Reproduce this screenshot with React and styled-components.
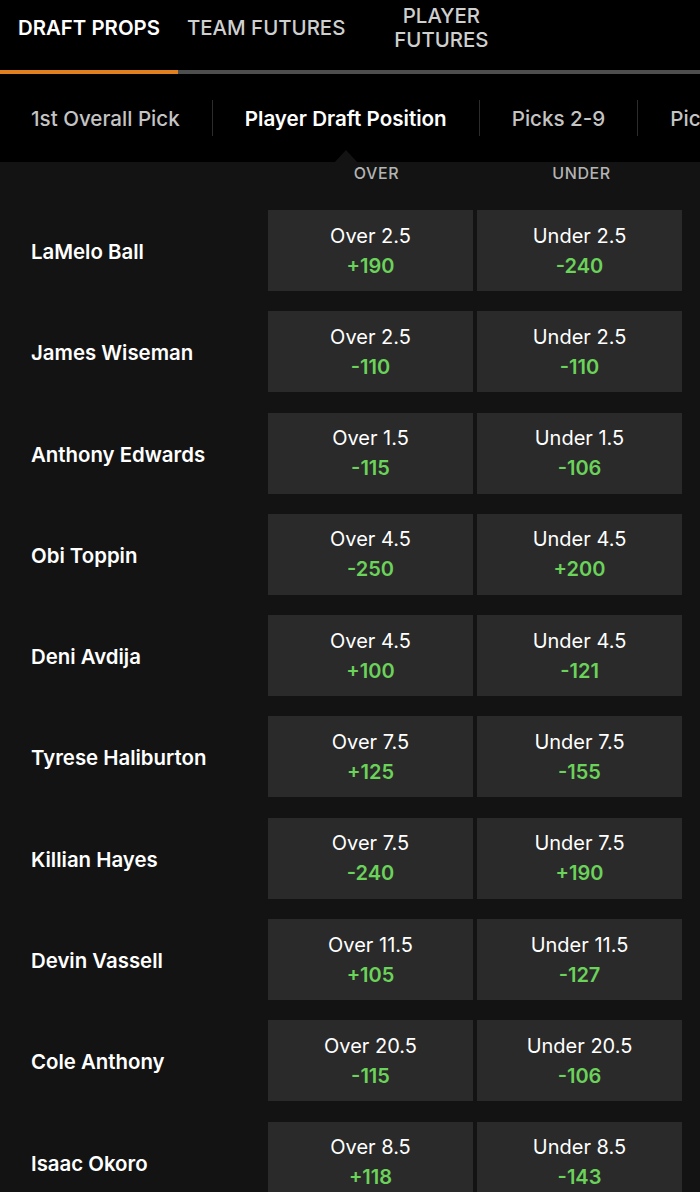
import React from 'react';
import styled, { createGlobalStyle } from 'styled-components';

const players = [
  { name: 'LaMelo Ball', line: '2.5', over: '+190', under: '-240' },
  { name: 'James Wiseman', line: '2.5', over: '-110', under: '-110' },
  { name: 'Anthony Edwards', line: '1.5', over: '-115', under: '-106' },
  { name: 'Obi Toppin', line: '4.5', over: '-250', under: '+200' },
  { name: 'Deni Avdija', line: '4.5', over: '+100', under: '-121' },
  { name: 'Tyrese Haliburton', line: '7.5', over: '+125', under: '-155' },
  { name: 'Killian Hayes', line: '7.5', over: '-240', under: '+190' },
  { name: 'Devin Vassell', line: '11.5', over: '+105', under: '-127' },
  { name: 'Cole Anthony', line: '20.5', over: '-115', under: '-106' },
  { name: 'Isaac Okoro', line: '8.5', over: '+118', under: '-143' },
];

const subTabs = ['1st Overall Pick', 'Player Draft Position', 'Picks 2-9', 'Picks 10-14'];

const App = () =>
  <Page>
    <GlobalStyle />
    <TopTabs>
      <TopTab active>DRAFT PROPS</TopTab>
      <TopTab>TEAM FUTURES</TopTab>
      <TopTab wrap>PLAYER<br />FUTURES</TopTab>
    </TopTabs>
    <Indicator>
      <IndicatorFill />
    </Indicator>
    <SubTabs>
      {subTabs.map((t, i) =>
        <SubTab key={t} active={i === 1} first={i === 0}>
          {t}
          {i === 1 && <Pointer />}
        </SubTab>
      )}
    </SubTabs>
    <Content>
      <HeaderRow>
        <span />
        <ColLabel shift={6}>OVER</ColLabel>
        <ColLabel shift={2}>UNDER</ColLabel>
      </HeaderRow>
      {players.map(p => <PlayerRow key={p.name} player={p} />)}
    </Content>
  </Page>

export default App;

const PlayerRow = ({player}) =>
  <Row>
    <Name>{player.name}</Name>
    <Cell>
      <CellLabel>Over {player.line}</CellLabel>
      <Odds>{player.over}</Odds>
    </Cell>
    <Cell>
      <CellLabel>Under {player.line}</CellLabel>
      <Odds>{player.under}</Odds>
    </Cell>
  </Row>

const GlobalStyle = createGlobalStyle`
  body {
    margin: 0;
    background: #131313;
    font-family: Inter, Roboto, "Liberation Sans", sans-serif;
    -webkit-font-smoothing: antialiased;
  }
`

const Page = styled.div`
  width: 700px;
  height: 1192px;
  overflow: hidden;
  background: #131313;
`

const TopTabs = styled.nav`
  display: flex;
  align-items: center;
  height: 70px;
  background: #000;
  padding-left: 18px;
  gap: 27px;
`

const TopTab = styled.div`
  color: ${p => p.active ? '#fff' : '#cfcfcf'};
  font-weight: ${p => p.active ? 600 : 500};
  font-size: 20.4px;
  line-height: 24px;
  text-align: center;
  margin-left: ${p => p.wrap ? '22px' : '0'};
  margin-top: ${p => p.wrap ? '-14px' : '-15px'};
`

const Indicator = styled.div`
  height: 4px;
  background: #4e4e4e;
  border-bottom: 1px solid #000;
`

const IndicatorFill = styled.div`
  width: 178px;
  height: 100%;
  background: #e1801f;
`

const SubTabs = styled.div`
  display: flex;
  align-items: center;
  height: 87px;
  background: #000;
  white-space: nowrap;
  overflow: hidden;
`

const SubTab = styled.div`
  position: relative;
  display: flex;
  align-items: center;
  height: 36px;
  padding: 0 32px 0 ${p => p.first ? '31px' : '32px'};
  border-left: ${p => p.first ? 'none' : '1px solid #2c2c2c'};
  color: ${p => p.active ? '#fff' : '#c4c4c4'};
  font-weight: ${p => p.active ? 600 : 500};
  font-size: 20.6px;
  margin-top: -1px;
`

const Pointer = styled.span`
  position: absolute;
  left: 50%;
  top: 50px;
  margin-left: -12px;
  width: 0;
  height: 0;
  border-left: 12px solid transparent;
  border-right: 12px solid transparent;
  border-bottom: 13px solid #131313;
`

const Content = styled.main`
  padding: 0 18px 0 31px;
`

const HeaderRow = styled.div`
  display: grid;
  grid-template-columns: 233px 205px 205px;
  column-gap: 4px;
  height: 48px;
  padding-top: 1px;
  box-sizing: border-box;
`

const ColLabel = styled.div`
  color: #b4b4b4;
  font-size: 16px;
  font-weight: 500;
  letter-spacing: 0.6px;
  text-align: center;
  line-height: 20px;
  padding-left: ${p => p.shift * 2}px;
`

const Row = styled.div`
  display: grid;
  grid-template-columns: 233px 205px 205px;
  column-gap: 4px;
  height: 81px;
  margin-bottom: 20.3px;
  align-items: center;
`

const Name = styled.div`
  color: #fff;
  font-weight: 600;
  font-size: 20.4px;
  margin-top: 2px;
`

const Cell = styled.div`
  height: 100%;
  background: #2a2a2a;
  display: flex;
  flex-direction: column;
  justify-content: center;
  align-items: center;
`

const CellLabel = styled.div`
  color: #fff;
  font-size: 20px;
  line-height: 30px;
`

const Odds = styled.div`
  color: #6bd25a;
  font-size: 20px;
  font-weight: 600;
  line-height: 30px;
`
